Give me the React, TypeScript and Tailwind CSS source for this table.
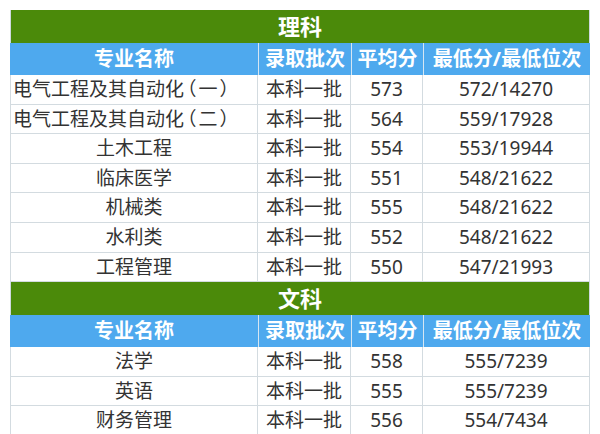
import React from "react";

const cols = "grid grid-cols-[248px_93px_72px_167px]";

const sci = [
  ["电气工程及其自动化|（一）", "本科一批", "573", "572/14270"],
  ["电气工程及其自动化|（二）", "本科一批", "564", "559/17928"],
  ["土木工程", "本科一批", "554", "553/19944"],
  ["临床医学", "本科一批", "551", "548/21622"],
  ["机械类", "本科一批", "555", "548/21622"],
  ["水利类", "本科一批", "552", "548/21622"],
  ["工程管理", "本科一批", "550", "547/21993"],
];
const arts = [
  ["法学", "本科一批", "558", "555/7239"],
  ["英语", "本科一批", "555", "555/7239"],
  ["财务管理", "本科一批", "556", "554/7434"],
];

function Cell({ text }: { text: string }) {
  if (text.includes("|")) {
    const [a, b] = text.split("|");
    return (
      <>
        {a}
        <span className="ml-[3px] [font-feature-settings:'halt'] tracking-[2px]">{b}</span>
      </>
    );
  }
  return <>{text}</>;
}

function Section({ title, rows }: { title: string; rows: string[][] }) {
  return (
    <div>
      <div className="h-[33px] bg-[#4b8a0a] flex items-center justify-center text-white font-bold text-[22px] border-x border-[#cfd9de]">
        {title}
      </div>
      <div className={`${cols} h-[32px] bg-[#4ea9ee] text-white font-bold text-[20px]`}>
        {["专业名称", "录取批次", "平均分", "最低分/最低位次"].map((h, i) => (
          <div
            key={i}
            className={`flex items-center justify-center ${i > 0 ? "border-l border-[#d6e6f2]" : ""}`}
          >
            {h}
          </div>
        ))}
      </div>
      {rows.map((r, ri) => (
        <div key={ri} className={`${cols} h-[29.6px] text-[#333] text-[19px] bg-white`}>
          {r.map((c, i) => (
            <div
              key={i}
              className={`flex items-center ${i === 0 && c.includes("|") ? "justify-start pl-[2px]" : "justify-center"} border-b border-[#d3dbe0] ${i === 0 ? "border-l" : ""} border-r whitespace-nowrap`}
            >
              <Cell text={c} />
            </div>
          ))}
        </div>
      ))}
    </div>
  );
}

export default function App() {
  return (
    <div
      className="w-[600px] h-[434px] bg-white overflow-hidden pt-[10px] pl-[10px]"
      style={{ fontFamily: '"Noto Sans", "Noto Sans CJK SC", sans-serif' }}
    >
      <div className="w-[580px]">
        <Section title="理科" rows={sci} />
        <Section title="文科" rows={arts} />
      </div>
    </div>
  );
}
